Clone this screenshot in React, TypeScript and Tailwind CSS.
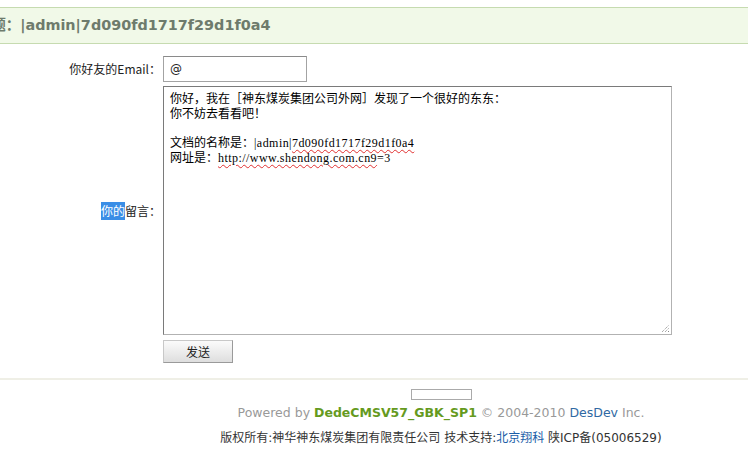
import React from "react";

const cjk = '"Noto Sans CJK SC", sans-serif';

export default function App() {
  return (
    <div
      className="w-[748px] h-[458px] overflow-hidden bg-white pt-[7px] text-[12px] text-[#222]"
      style={{ fontFamily: '"DejaVu Sans", "Noto Sans CJK SC", sans-serif' }}
    >
      {/* title bar */}
      <div className="h-[37px] border-y border-[#c6dbb0] bg-[#f1f9e8] flex items-center overflow-hidden">
        <div className="ml-[-23px] whitespace-nowrap text-[14.4px] font-bold text-[#6e7b6c] pt-[1px]">
          标题：|admin|7d090fd1717f29d1f0a4
        </div>
      </div>

      {/* form */}
      <div className="mt-[12px] grid grid-cols-[163px_1fr]">
        <div className="flex items-center justify-end pr-[2px] text-[#222]" style={{ fontFamily: cjk }}>
          <span>你好友的Email：</span>
        </div>
        <div>
          <div className="w-[144px] h-[26px] border border-[#a3a3a3] border-t-[#8a8a8a] flex items-center pl-[6px] text-[12px]">
            @
          </div>
        </div>

        <div className="mt-[4px] flex items-center justify-end pr-[2px]" style={{ fontFamily: cjk }}>
          <span className="bg-[#3a8ee6] text-white">你的</span>
          <span>留言：</span>
        </div>
        <div className="mt-[4px]">
          <div
            className="relative w-[509px] h-[249px] border border-[#b2b2b2] border-l-[#7a7a7a] border-t-[#7a7a7a] pl-[6px] pt-[5px] text-[12px] leading-[14.7px] text-black"
            style={{ fontFamily: '"Liberation Serif", "Noto Sans CJK SC", serif' }}
          >
            <div>你好，我在［神东煤炭集团公司外网］发现了一个很好的东东：</div>
            <div>你不妨去看看吧！</div>
            <div>&nbsp;</div>
            <div>
              文档的名称是：<span className="tracking-[0.45px]">|admin|</span>
              <span className="tracking-[0.45px] underline decoration-wavy decoration-[#e03030] decoration-1 underline-offset-2">7d090fd1717f29d1f0a4</span>
            </div>
            <div>
              网址是：
              <span className="tracking-[0.45px] underline decoration-wavy decoration-[#e03030] decoration-1 underline-offset-2">http://www.shendong.com.cn9</span>
              <span className="tracking-[0.45px]">=3</span>
            </div>
            <svg className="absolute right-[1px] bottom-[1px]" width="9" height="9" viewBox="0 0 9 9">
              <line x1="1" y1="8" x2="8" y2="1" stroke="#888" strokeWidth="1" strokeDasharray="1 1" />
              <line x1="4" y1="8" x2="8" y2="4" stroke="#888" strokeWidth="1" strokeDasharray="1 1" />
              <line x1="7" y1="8" x2="8" y2="7" stroke="#888" strokeWidth="1" />
            </svg>
          </div>
        </div>

        <div className="mt-[5px]" />
        <div className="mt-[5px]">
          <button
            className="w-[70px] h-[23px] border border-[#9a9a9a] border-t-[#c8c8c8] border-l-[#c8c8c8] bg-gradient-to-b from-[#fbfbfb] to-[#dedede] text-[12px] text-[#222] flex items-center justify-center"
            style={{ fontFamily: cjk }}
          >
            发送
          </button>
        </div>
      </div>

      {/* footer */}
      <div className="mt-[15px] border-t-2 border-[#efefe6]" />
      <div className="w-[882px] flex flex-col items-center">
        <div className="mt-[9px] w-[61px] h-[11px] border border-[#aaa] bg-white" />
        <div className="mt-[4px] text-[12.5px] text-[#999] whitespace-nowrap leading-[18px]">
          Powered by <b className="text-[#659a1e]">DedeCMSV57_GBK_SP1</b> © 2004-2010{" "}
          <span className="text-[#2f69a3]">DesDev</span> Inc.
        </div>
        <div
          className="mt-[7px] text-[12px] text-[#333] whitespace-nowrap leading-[18px]"
          style={{ fontFamily: '"DejaVu Sans", "Noto Sans CJK SC", sans-serif' }}
        >
          版权所有:神华神东煤炭集团有限责任公司 技术支持:<span className="text-[#1c5ea8]">北京翔科</span> 陕ICP备(05006529)
        </div>
      </div>
    </div>
  );
}
